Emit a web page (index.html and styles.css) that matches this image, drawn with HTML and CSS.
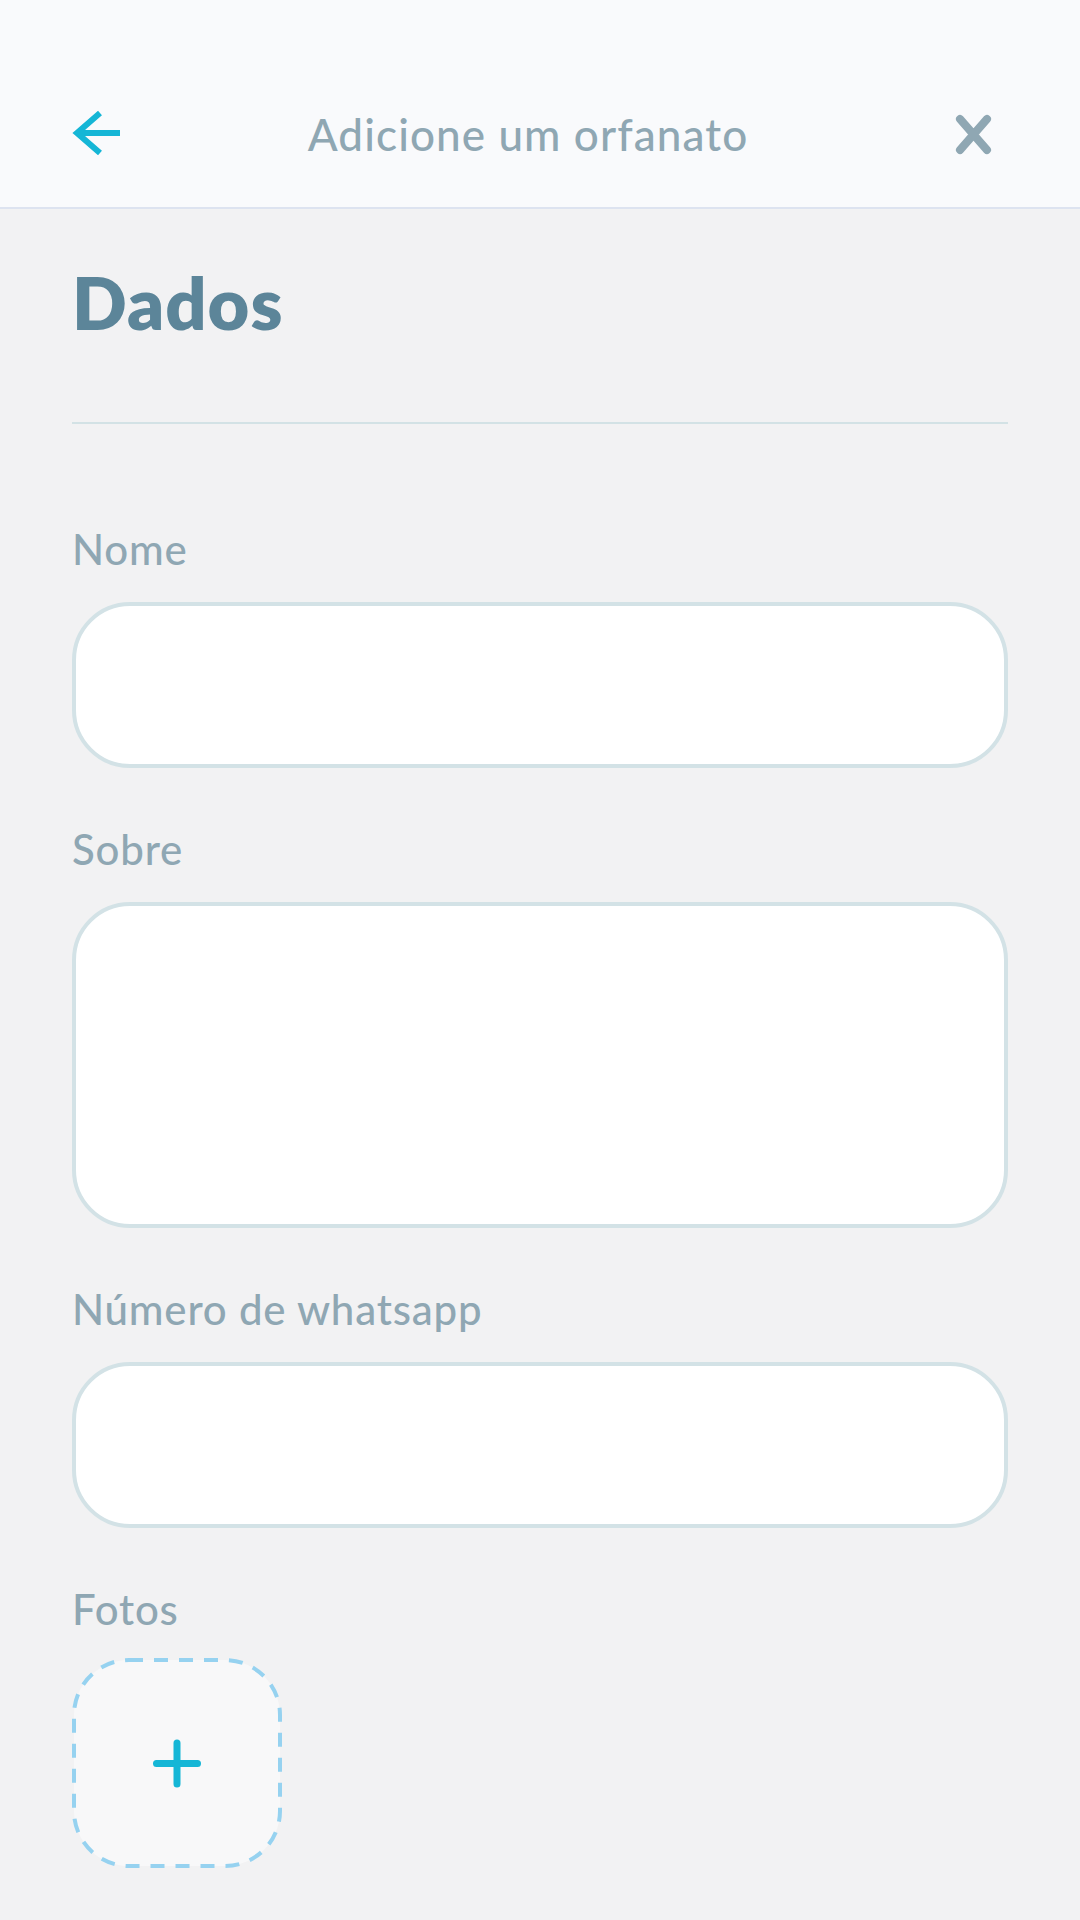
FILE: index.html
```html
<!DOCTYPE html>
<html lang="pt-BR">
<head>
<meta charset="utf-8">
<title>Adicione um orfanato</title>
<link rel="stylesheet" href="styles.css">
</head>
<body>
<header class="topbar">
  <div class="topbar-row">
    <svg class="icon-back" width="64" height="52" viewBox="0 0 64 52" aria-label="Voltar">
      <path d="M14 25 H56" fill="none" stroke="#15b6d6" stroke-width="6"/>
      <path d="M36 5 L13 25 L36 45" fill="none" stroke="#15b6d6" stroke-width="6" stroke-linejoin="miter"/>
    </svg>
    <h1 class="topbar-title">Adicione um orfanato</h1>
    <svg class="icon-close" width="52" height="52" viewBox="0 0 52 52" aria-label="Fechar">
      <path d="M12 11 L39 42 M39 11 L12 42" fill="none" stroke="#8fa7b3" stroke-width="8" stroke-linecap="round"/>
    </svg>
  </div>
</header>

<main class="content">
  <h2 class="section-title">Dados</h2>
  <div class="divider"></div>

  <div class="field">
    <label class="label">Nome</label>
    <div class="input"></div>
  </div>

  <div class="field">
    <label class="label">Sobre</label>
    <div class="input textarea"></div>
  </div>

  <div class="field">
    <label class="label">Número de whatsapp</label>
    <div class="input"></div>
  </div>

  <div class="field">
    <label class="label">Fotos</label>
    <svg class="photo-add" width="210" height="210" viewBox="0 0 210 210" aria-label="Adicionar foto">
      <rect x="2" y="2" width="206" height="206" rx="55" ry="55" fill="#f8f8f9" stroke="#96d2f0" stroke-width="4" stroke-dasharray="14 11"/>
      <path d="M105 85 V126 M84.5 105.5 H125.5" fill="none" stroke="#15b6d6" stroke-width="7" stroke-linecap="round"/>
    </svg>
  </div>
</main>
</body>
</html>
```

FILE: styles.css
```css
* {
  box-sizing: border-box;
}

html, body {
  margin: 0;
  padding: 0;
}

body {
  width: 1080px;
  height: 1920px;
  background: #f2f2f3;
  font-family: "Lato", "Noto Sans", sans-serif;
  overflow: hidden;
}

.topbar {
  height: 209px;
  background: #f9fafc;
  border-bottom: 2px solid #dde3f0;
  padding: 108px 72px 0 64px;
}

.topbar-row {
  display: flex;
  align-items: center;
  height: 52px;
}

.icon-back,
.icon-close {
  flex: none;
  display: block;
}

.icon-close {
  margin-right: 8px;
}

.topbar-title {
  flex: 1;
  margin: 0;
  padding-right: 20px;
  text-align: center;
  font-size: 44px;
  line-height: 52px;
  font-weight: 500;
  letter-spacing: 1.1px;
  color: #8fa7b3;
}

.content {
  padding: 0 72px;
}

.section-title {
  margin: 50px 0 0;
  font-size: 72px;
  line-height: 86px;
  font-weight: 800;
  letter-spacing: 1px;
  color: #5c8599;
}

.divider {
  margin-top: 77px;
  height: 2px;
  background: #d3e2e5;
}

.field {
  display: flex;
  flex-direction: column;
  align-items: flex-start;
  margin-top: 56px;
}

.divider + .field {
  margin-top: 100px;
}

.label {
  font-size: 42px;
  line-height: 50px;
  font-weight: 500;
  letter-spacing: 0.8px;
  color: #8fa7b3;
  margin-bottom: 28px;
}

.input {
  align-self: stretch;
  height: 166px;
  background: #ffffff;
  border: 4px solid #d3e2e6;
  border-radius: 58px;
}

.input.textarea {
  height: 326px;
}

.photo-add {
  display: block;
  margin-top: -4px;
}
```
